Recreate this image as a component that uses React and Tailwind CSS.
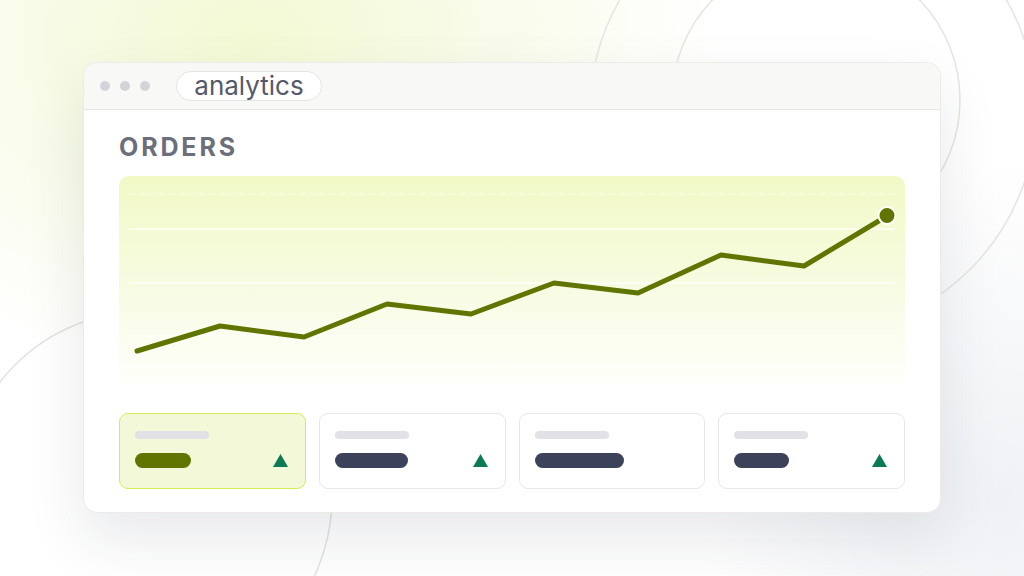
export default function App() {
  const pts = [
    [18, 175], [101, 150], [185, 161], [268, 128], [352, 138],
    [435, 107], [519, 117], [602, 79], [685, 90], [768, 40],
  ];
  const cards = [
    { w: 56, active: true, tri: true },
    { w: 73, active: false, tri: true },
    { w: 89, active: false, tri: false },
    { w: 55, active: false, tri: true },
  ];
  const line = pts.map((p) => p.join(",")).join(" ");
  return (
    <div className="relative w-[1024px] h-[576px] overflow-hidden bg-white pt-[62px] pl-[83px] font-['Inter','Noto_Sans',sans-serif]">
      {/* decorative background */}
      <div className="absolute inset-0 bg-[radial-gradient(ellipse_470px_340px_at_250px_40px,#f3f9d4_0%,#f7fbe5_40%,rgba(255,255,255,0)_100%)]" />
      <div className="absolute inset-0 bg-[radial-gradient(ellipse_300px_340px_at_1000px_500px,#eff1f4_0%,rgba(255,255,255,0)_100%)]" />
      <svg className="absolute inset-0" width="1024" height="576" viewBox="0 0 1024 576" fill="none">
        <circle cx="813" cy="111" r="223" stroke="#e5e5e1" strokeWidth="1.5" />
        <circle cx="816" cy="100" r="144" stroke="#e5e5e1" strokeWidth="1.5" />
        <circle cx="146" cy="497" r="186" stroke="#e3e3df" strokeWidth="1.5" />
      </svg>

      {/* window */}
      <div className="relative z-10 w-[858px] h-[451px] rounded-[14px] bg-white border border-[#ebebe7] shadow-[0_26px_60px_rgba(30,35,55,0.10)] overflow-hidden flex flex-col">
        <div className="h-[47px] shrink-0 bg-[#f8f8f6] border-b border-[#e7e7e3] flex items-center pl-[16px]">
          <div className="flex items-center gap-[10px]">
            <span className="w-[10px] h-[10px] rounded-full bg-[#d3d3da]" />
            <span className="w-[10px] h-[10px] rounded-full bg-[#d3d3da]" />
            <span className="w-[10px] h-[10px] rounded-full bg-[#d3d3da]" />
          </div>
          <div className="ml-[26px] h-[30px] w-[146px] rounded-full bg-white border border-[#e4e4e0] flex items-center justify-center">
            <span className="text-[26px] leading-none text-[#555969] -mt-[1px]">analytics</span>
          </div>
        </div>

        <div className="flex-1 px-[35px] pt-[25px]">
          <div className="text-[25px] leading-none font-bold tracking-[0.115em] text-[#6b6e7b]">ORDERS</div>

          <div className="relative mt-[16px] h-[209px] rounded-[10px] bg-gradient-to-b from-[#f2f9c6] via-[#f7fbe0] to-[#fefffb] overflow-hidden">
            <svg className="absolute inset-0" width="786" height="209" viewBox="0 0 786 209" fill="none">
              <line x1="10" y1="18" x2="776" y2="18" stroke="#ffffff" strokeOpacity="0.45" strokeWidth="1.5" strokeDasharray="6 4" />
              <line x1="10" y1="53" x2="776" y2="53" stroke="#ffffff" strokeOpacity="0.8" strokeWidth="1.5" />
              <line x1="10" y1="107" x2="776" y2="107" stroke="#ffffff" strokeOpacity="0.8" strokeWidth="1.5" />
              <line x1="10" y1="160" x2="776" y2="160" stroke="#ffffff" strokeOpacity="0.6" strokeWidth="1.5" />
              <polyline points={line} stroke="#607500" strokeWidth="5" strokeLinejoin="round" strokeLinecap="round" />
              <circle cx="768" cy="39.5" r="8.5" fill="#607500" stroke="#ffffff" strokeWidth="2" />
            </svg>
          </div>

          <div className="mt-[28px] grid grid-cols-4 gap-[13px]">
            {cards.map((c, i) => (
              <div
                key={i}
                className={
                  c.active
                    ? "h-[76px] rounded-[9px] border-[1.5px] border-[#d3ec58] bg-[#f3f9d8] pt-[17px] pl-[15px] pr-[17px]"
                    : "h-[76px] rounded-[9px] border-[1.5px] border-[#e7e7e3] bg-white pt-[17px] pl-[15px] pr-[17px]"
                }
              >
                <div className="h-[8px] w-[74px] rounded-full bg-[#e1e1e6]" />
                <div className="mt-[14px] flex items-center justify-between">
                  <div
                    className={c.active ? "h-[15px] rounded-full bg-[#607500]" : "h-[15px] rounded-full bg-[#3b4259]"}
                    style={{ width: c.w }}
                  />
                  {c.tri && (
                    <svg width="15" height="13" viewBox="0 0 15 13">
                      <polygon points="7.5,0 15,13 0,13" fill="#0c7a55" />
                    </svg>
                  )}
                </div>
              </div>
            ))}
          </div>
        </div>
      </div>
    </div>
  );
}
